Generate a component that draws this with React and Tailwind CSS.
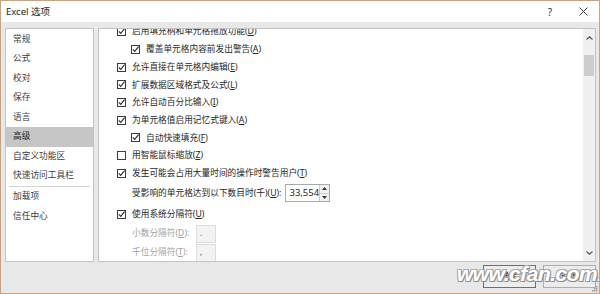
import React from "react";

const FONT = { fontFamily: '"Noto Sans", "Noto Sans CJK SC", sans-serif' };

// checkbox glyph, 9px like the scaled-down Office dialog
const Box = ({ checked }) => (
  <svg width="9" height="9" viewBox="0 0 9 9" className="shrink-0">
    <rect x="0.5" y="0.5" width="8" height="8" fill="white" stroke="#3c3c3c" />
    {checked && (
      <path d="M1.8 4.4 L3.7 6.4 L7.6 1.6" fill="none" stroke="#2b2b2b" strokeWidth="1.1" />
    )}
  </svg>
);

const Lbl = ({ t, k, colon }) => (
  <span className="whitespace-nowrap">
    {t}(<u>{k}</u>){colon ? ":" : ""}
  </span>
);

const navItems = [
  "常规",
  "公式",
  "校对",
  "保存",
  "语言",
  "高级",
  "自定义功能区",
  "快速访问工具栏",
  "-",
  "加载项",
  "信任中心",
];

const rows = [
  { t: "启用填充柄和单元格拖放功能", k: "D", c: true },
  { t: "覆盖单元格内容前发出警告", k: "A", c: true, sub: true },
  { t: "允许直接在单元格内编辑", k: "E", c: true },
  { t: "扩展数据区域格式及公式", k: "L", c: true },
  { t: "允许自动百分比输入", k: "I", c: true },
  { t: "为单元格值启用记忆式键入", k: "A", c: true },
  { t: "自动快速填充", k: "F", c: true, sub: true },
  { t: "用智能鼠标缩放", k: "Z", c: false },
  { t: "发生可能会占用大量时间的操作时警告用户", k: "T", c: true },
];

const App = () => {
  return (
    <div
      className="w-[600px] h-[294px] bg-[#e8e8e8] border border-[#caa37e] flex flex-col overflow-hidden relative text-[#262626]"
      style={FONT}
    >
      {/* title bar */}
      <div className="h-[21px] bg-white flex items-center shrink-0">
        <span className="ml-[5px] text-[9.5px] leading-none text-[#1e1e1e]">Excel 选项</span>
        <span className="ml-auto text-[10px] leading-none text-[#333]">?</span>
        <svg width="9" height="9" viewBox="0 0 9 9" className="ml-[27px] mr-[11px]">
          <path d="M0.5 0.5 L8.5 8.5 M8.5 0.5 L0.5 8.5" stroke="#333" strokeWidth="0.9" />
        </svg>
      </div>

      {/* body */}
      <div className="flex-1 flex flex-col pt-[6px] pl-[4px] pr-[3px] pb-[5px]">
        <div className="flex gap-[4px] h-[234px]">
          {/* left nav */}
          <div className="w-[89px] bg-white border border-[#c3c3c3] pt-[0.5px] text-[8.7px] text-[#3a3a3a]">
            {navItems.map((n, i) =>
              n === "-" ? (
                <div key={i} className="h-[1.5px] flex items-center px-[3px]">
                  <div className="h-px w-full bg-[#d4d4d4]" />
                </div>
              ) : (
                <div
                  key={i}
                  className={
                    "h-[19.5px] flex items-center pl-[7px] leading-none " +
                    (n === "高级" ? "bg-[#c6c6c6] text-[#1e1e1e]" : "")
                  }
                >
                  {n}
                </div>
              )
            )}
          </div>

          {/* right options panel */}
          <div className="flex-1 bg-white border border-[#c3c3c3] flex overflow-hidden">
            <div className="flex-1 overflow-hidden text-[8.7px] leading-none">
              <div className="-mt-[6px] pl-[18px]">
                {rows.map((r, i) => (
                  <div
                    key={i}
                    className={"h-[17.7px] flex items-center gap-[6px] " + (r.sub ? "pl-[14px]" : "")}
                  >
                    <Box checked={r.c} />
                    <Lbl t={r.t} k={r.k} />
                  </div>
                ))}
                <div className="h-[22px] flex items-center pl-[15px]">
                  <Lbl t="受影响的单元格达到以下数目时(千)" k="U" colon />
                  <div className="ml-[4px] h-[18px] w-[45px] border border-[#a9a9a9] flex">
                    <div className="flex-1 flex items-center pl-[3px] text-[9.5px]">33,554</div>
                    <div className="w-[11px] border-l border-[#c8c8c8] flex flex-col">
                      <div className="flex-1 flex items-center justify-center bg-[#f2f2f2] border-b border-[#d0d0d0]">
                        <svg width="5" height="3" viewBox="0 0 5 3">
                          <path d="M0 3 L2.5 0 L5 3 Z" fill="#333" />
                        </svg>
                      </div>
                      <div className="flex-1 flex items-center justify-center bg-[#f2f2f2]">
                        <svg width="5" height="3" viewBox="0 0 5 3">
                          <path d="M0 0 L2.5 3 L5 0 Z" fill="#333" />
                        </svg>
                      </div>
                    </div>
                  </div>
                </div>
                <div className="h-[20px] flex items-center gap-[6px]">
                  <Box checked />
                  <Lbl t="使用系统分隔符" k="U" />
                </div>
                <div className="h-[19px] flex items-center pl-[15px] text-[#a3a3a3]">
                  <div className="w-[64px]">
                    <Lbl t="小数分隔符" k="D" colon />
                  </div>
                  <div className="h-[18px] w-[20px] bg-[#f3f3f3] border border-[#dcdcdc] flex items-center pl-[3px] text-[#555]">
                    .
                  </div>
                </div>
                <div className="h-[19px] flex items-center pl-[15px] text-[#a3a3a3]">
                  <div className="w-[64px]">
                    <Lbl t="千位分隔符" k="T" colon />
                  </div>
                  <div className="h-[18px] w-[20px] bg-[#f3f3f3] border border-[#dcdcdc] flex items-center pl-[3px] text-[#555]">
                    ,
                  </div>
                </div>
              </div>
            </div>

            {/* scrollbar */}
            <div className="w-[12px] bg-[#f0f0f0] flex flex-col items-center">
              <div className="h-[17px] flex items-center justify-center">
                <svg width="7" height="4" viewBox="0 0 7 4">
                  <path d="M0.5 3.5 L3.5 0.8 L6.5 3.5" fill="none" stroke="#555" strokeWidth="1.1" />
                </svg>
              </div>
              <div className="mt-[9px] h-[21px] w-[10px] bg-[#cdcdcd]" />
              <div className="mt-auto h-[17px] flex items-center justify-center">
                <svg width="7" height="4" viewBox="0 0 7 4">
                  <path d="M0.5 0.5 L3.5 3.2 L6.5 0.5" fill="none" stroke="#555" strokeWidth="1.1" />
                </svg>
              </div>
            </div>
          </div>
        </div>

        {/* buttons */}
        <div className="mt-[3px] flex justify-end gap-[7px] text-[8.7px] leading-none">
          <button className="h-[23px] w-[53px] bg-[#ececec] border border-[#6f6f6f] flex items-center justify-center text-[#222]">
            确定
          </button>
          <button className="h-[23px] w-[53px] bg-[#ececec] border border-[#adadad] flex items-center justify-center text-[#222]">
            取消
          </button>
        </div>
      </div>

      {/* watermark over the buttons */}
      <div
        className="absolute left-[456px] top-[262px] text-[21px] font-bold italic leading-none text-white tracking-[-0.5px] pointer-events-none"
        style={{
          fontFamily: '"Liberation Sans", sans-serif',
          textShadow:
            "1px 1px 0 #8a8a8a, -1px -1px 0 #b0b0b0, 1px -1px 0 #a0a0a0, -1px 1px 0 #a0a0a0",
        }}
      >
        www.cfan.com.cn
      </div>

      {/* resize grip */}
      <svg width="6" height="6" viewBox="0 0 6 6" className="absolute right-[1px] bottom-[1px]">
        <rect x="4" y="0" width="1.5" height="1.5" fill="#9a9a9a" />
        <rect x="2" y="2" width="1.5" height="1.5" fill="#9a9a9a" />
        <rect x="4" y="2" width="1.5" height="1.5" fill="#9a9a9a" />
        <rect x="0" y="4" width="1.5" height="1.5" fill="#9a9a9a" />
        <rect x="2" y="4" width="1.5" height="1.5" fill="#9a9a9a" />
        <rect x="4" y="4" width="1.5" height="1.5" fill="#9a9a9a" />
      </svg>
    </div>
  );
};

export default App;
